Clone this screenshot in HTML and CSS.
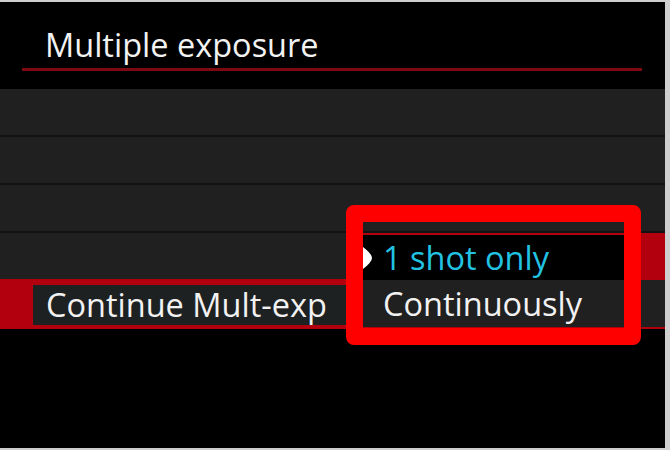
FILE: index.html
```html
<!DOCTYPE html>
<html>
<head>
<meta charset="utf-8">
<link rel="stylesheet" href="styles.css">
</head>
<body>
<div class="screen">
  <div class="header">
    <div class="title">Multiple exposure</div>
    <div class="underline"></div>
  </div>
  <div class="list">
    <div class="row"></div>
    <div class="row"></div>
    <div class="row"></div>
    <div class="row"></div>
    <div class="row selected">
      <div class="row-box">Continue Mult-exp</div>
    </div>
  </div>

  <div class="dropdown">
    <div class="option current">
      <div class="option-box">
        <svg class="pointer" width="10" height="22" viewBox="0 0 10 22"><path d="M0,0 Q9,7 9,11 Q9,15 0,22 Z" fill="#fff"/></svg>
        <span class="option-text cyan">1 shot only</span>
      </div>
    </div>
    <div class="option">
      <span class="option-text">Continuously</span>
    </div>
  </div>

  <div class="callout"></div>
</div>
</body>
</html>
```

FILE: styles.css
```css
html, body {
  margin: 0;
  padding: 0;
  background: #cfcfcf;
  width: 670px;
  height: 450px;
  overflow: hidden;
}

.screen {
  position: relative;
  margin-top: 2px;
  width: 665px;
  height: 446px;
  background: #000;
  font-family: "Open Sans", "Noto Sans", sans-serif;
  color: #f2f2f2;
}

.header {
  height: 87px;
  display: flex;
  flex-direction: column;
}

.title {
  padding-top: 27px;
  padding-left: 45px;
  font-size: 32.5px;
  line-height: 32px;
  height: 32px;
}

.underline {
  margin-top: 7px;
  margin-left: 22px;
  width: 620px;
  height: 3px;
  background: #7d0a10;
}

.list {
  display: flex;
  flex-direction: column;
  gap: 2px;
  background: #121212;
}

.row {
  height: 46px;
  background: #202020;
}

.row.selected {
  height: 50px;
  margin-top: -2px;
  background: #b3000f;
  padding: 6px 0 4px 33px;
  box-sizing: border-box;
}

.row-box {
  width: 320px;
  height: 40px;
  background: #1e2121;
  padding-left: 13px;
  font-size: 32.5px;
  line-height: 40px;
}

.dropdown {
  position: absolute;
  left: 346px;
  top: 231px;
  width: 319px;
  display: flex;
  flex-direction: column;
}

.option {
  height: 47px;
  background: #202020;
  display: flex;
  align-items: center;
  padding-left: 37px;
}

.option.current {
  background: #b3000f;
  padding: 2px 0 0 0;
  box-sizing: border-box;
  align-items: stretch;
}

.option-box {
  width: 285px;
  box-sizing: border-box;
  background: #000;
  display: flex;
  align-items: center;
  padding-left: 17px;
}

.pointer {
  margin-right: 10px;
}

.option-text {
  font-size: 32.5px;
  line-height: 40px;
}

.cyan {
  color: #22c3e2;
}

.callout {
  position: absolute;
  left: 346px;
  top: 203px;
  width: 295px;
  height: 140px;
  box-sizing: border-box;
  border: 17px solid #ff0000;
  border-radius: 8px;
}
```
